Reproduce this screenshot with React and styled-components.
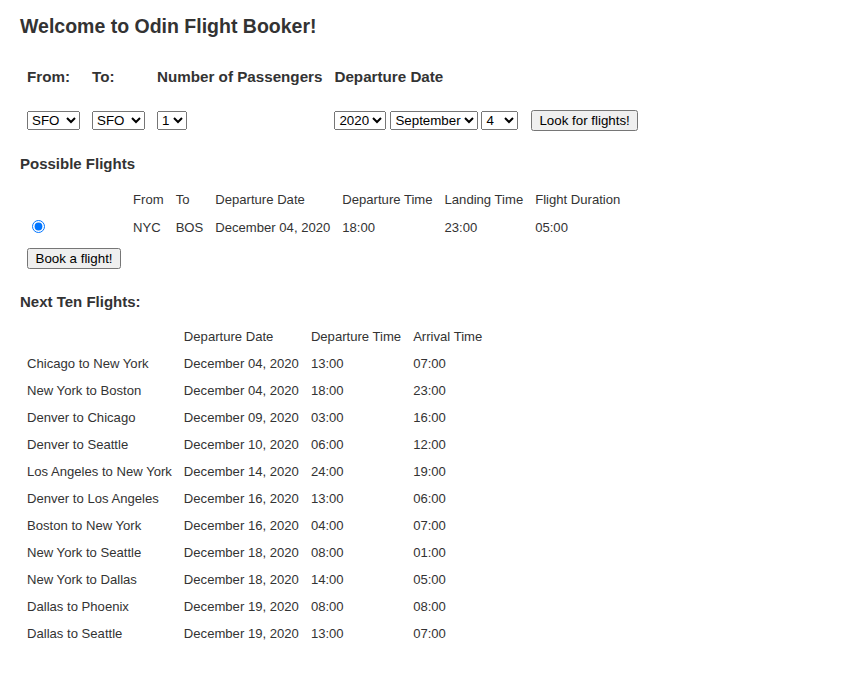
import React from "react";
import styled, { createGlobalStyle } from "styled-components";

const Global = createGlobalStyle`
  html, body { margin: 0; padding: 0; background: #fff; }
  body { font-family: "Liberation Sans", Arial, sans-serif; color: #333; }
`;

const Page = styled.main`
  padding: 0 20px 40px;
`;

const Title = styled.h1`
  font-size: 19.5px;
  line-height: 24px;
  font-weight: bold;
  margin: 14px 0 0;
`;

const Heading = styled.h3`
  font-size: 15px;
  line-height: 18px;
  font-weight: bold;
  margin: ${(p) => p.$mt}px 0 0;
`;

const SearchTable = styled.table`
  border-spacing: 2px;
  margin-top: 23px;
  margin-left: 0;
  th {
    font-size: 15.2px;
    line-height: 17px;
    font-weight: bold;
    text-align: left;
    padding: 5px;
    white-space: nowrap;
  }
  td {
    padding: 18px 5px 5px;
    white-space: nowrap;
  }
`;

const DataTable = styled.table`
  border-spacing: 2px;
  margin-top: ${(p) => p.$mt}px;
  font-size: 13.1px;
  th, td {
    font-weight: normal;
    text-align: left;
    padding: 5px;
    line-height: 15px;
    white-space: nowrap;
  }
`;

const Select = styled.select`
  font-family: "Liberation Sans", Arial, sans-serif;
  font-size: 13.333px;
  color: #000;
  margin: 0 ${(p) => p.$mr || 0}px 0 0;
`;

const Button = styled.button`
  font-family: "Liberation Sans", Arial, sans-serif;
  font-size: 13.333px;
  color: #000;
  padding: 1px ${(p) => p.$px || 6}px;
  margin-left: ${(p) => p.$ml || 0}px;
`;

const Radio = styled.input`
  margin: 1px 3px 0 5px;
`;

const months = [
  "January", "February", "March", "April", "May", "June", "July",
  "August", "September", "October", "November", "December",
];

const flights = [
  ["Chicago to New York", "December 04, 2020", "13:00", "07:00"],
  ["New York to Boston", "December 04, 2020", "18:00", "23:00"],
  ["Denver to Chicago", "December 09, 2020", "03:00", "16:00"],
  ["Denver to Seattle", "December 10, 2020", "06:00", "12:00"],
  ["Los Angeles to New York", "December 14, 2020", "24:00", "19:00"],
  ["Denver to Los Angeles", "December 16, 2020", "13:00", "06:00"],
  ["Boston to New York", "December 16, 2020", "04:00", "07:00"],
  ["New York to Seattle", "December 18, 2020", "08:00", "01:00"],
  ["New York to Dallas", "December 18, 2020", "14:00", "05:00"],
  ["Dallas to Phoenix", "December 19, 2020", "08:00", "08:00"],
  ["Dallas to Seattle", "December 19, 2020", "13:00", "07:00"],
];

const airports = ["SFO", "NYC", "BOS", "ORD", "DEN", "SEA", "LAX", "DFW", "PHX"];

export default function App() {
  return (
    <Page>
      <Global />
      <Title>Welcome to Odin Flight Booker!</Title>
      <SearchTable>
        <thead>
          <tr>
            <th>From:</th>
            <th>To:</th>
            <th>Number of Passengers</th>
            <th>Departure Date</th>
            <th></th>
          </tr>
        </thead>
        <tbody>
          <tr>
            <td>
              <Select defaultValue="SFO">
                {airports.map((a) => <option key={a}>{a}</option>)}
              </Select>
            </td>
            <td>
              <Select defaultValue="SFO">
                {airports.map((a) => <option key={a}>{a}</option>)}
              </Select>
            </td>
            <td>
              <Select defaultValue="1">
                {[1, 2, 3, 4].map((n) => <option key={n}>{n}</option>)}
              </Select>
            </td>
            <td>
              <Select defaultValue="2020" $mr={4}>
                {[2020, 2021].map((y) => <option key={y}>{y}</option>)}
              </Select>
              <Select defaultValue="September" $mr={3}>
                {months.map((m) => <option key={m}>{m}</option>)}
              </Select>
              <Select defaultValue="4">
                {Array.from({ length: 31 }, (_, i) => i + 1).map((d) => (
                  <option key={d}>{d}</option>
                ))}
              </Select>
              <Button $ml={13}>Look for flights!</Button>
            </td>
          </tr>
        </tbody>
      </SearchTable>

      <Heading $mt={17}>Possible Flights</Heading>
      <DataTable $mt={12}>
        <thead>
          <tr>
            <th></th>
            <th>From</th>
            <th>To</th>
            <th>Departure Date</th>
            <th>Departure Time</th>
            <th>Landing Time</th>
            <th>Flight Duration</th>
          </tr>
        </thead>
        <tbody>
          <tr>
            <td><Radio type="radio" name="flight" defaultChecked /></td>
            <td>NYC</td>
            <td>BOS</td>
            <td>December 04, 2020</td>
            <td>18:00</td>
            <td>23:00</td>
            <td>05:00</td>
          </tr>
          <tr>
            <td><Button $px={6.5}>Book a flight!</Button></td>
          </tr>
        </tbody>
      </DataTable>

      <Heading $mt={17}>Next Ten Flights:</Heading>
      <DataTable $mt={11}>
        <thead>
          <tr>
            <th></th>
            <th>Departure Date</th>
            <th>Departure Time</th>
            <th>Arrival Time</th>
          </tr>
        </thead>
        <tbody>
          {flights.map((f) => (
            <tr key={f[0]}>
              {f.map((c, i) => <td key={i}>{c}</td>)}
            </tr>
          ))}
        </tbody>
      </DataTable>
    </Page>
  );
}
